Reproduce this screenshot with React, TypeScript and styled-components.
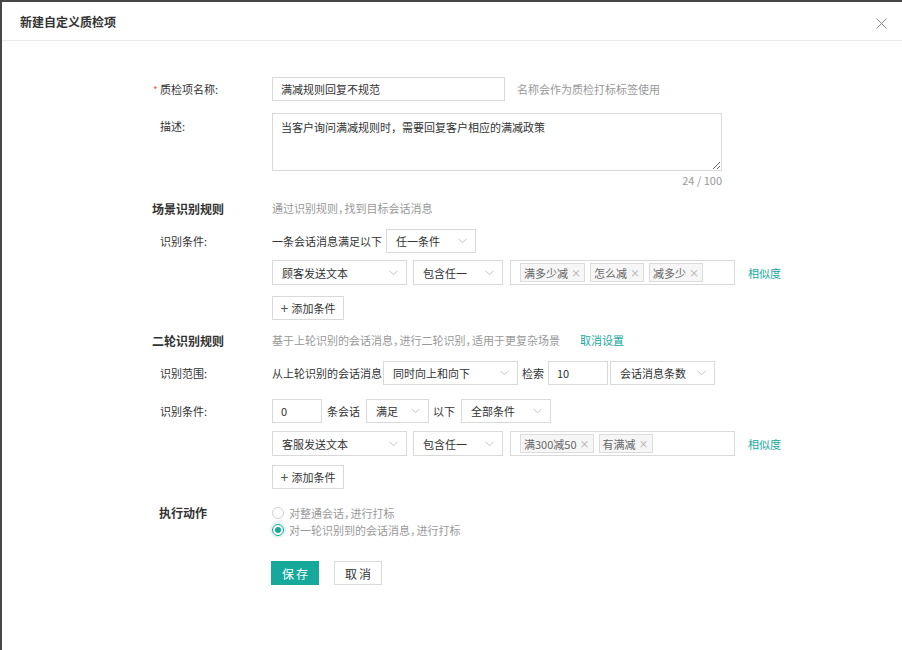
import React from 'react';
import styled, { createGlobalStyle } from 'styled-components';

const GlobalStyle = createGlobalStyle`
  html, body {
    margin: 0;
    padding: 0;
    background: #474747;
    font-family: "Noto Sans CJK SC", "Noto Sans", sans-serif;
    font-size: 11px;
    color: #333;
    font-feature-settings: "halt";
  }
  * { box-sizing: border-box; }
`;

const TEAL = '#17a89c';

const Modal = styled.div`
  margin: 2px 0 0 2px;
  background: #fff;
  height: 648px;
  overflow: hidden;
`;

const Header = styled.div`
  height: 39px;
  border-bottom: 1px solid #e9e9e9;
  display: flex;
  align-items: center;
  justify-content: space-between;
  padding: 0 14px 0 18px;
`;

const HeaderTitle = styled.div`
  font-size: 12px;
  font-weight: 700;
  color: #333;
`;

const Close = styled.button`
  border: 0;
  background: none;
  padding: 0;
  width: 14px;
  height: 14px;
  margin-top: 4px;
  display: flex;
  align-items: center;
  justify-content: center;
  cursor: pointer;
`;

const Body = styled.div`
  padding: 36px 0 0 150px;
`;

const Row = styled.div<{ $mt?: number; $h?: number }>`
  display: flex;
  align-items: center;
  margin-top: ${p => p.$mt ?? 0}px;
  min-height: ${p => p.$h ?? 24}px;
`;

const TopRow = styled.div<{ $mt?: number }>`
  display: flex;
  align-items: flex-start;
  margin-top: ${p => p.$mt ?? 0}px;
`;

const Label = styled.div<{ $top?: number }>`
  width: 120px;
  flex: none;
  padding-left: 8px;
  color: #333;
  position: relative;
  padding-top: ${p => p.$top ?? 0}px;
`;

const Star = styled.span`
  position: absolute;
  left: 1px;
  top: 1px;
  color: #f25a5a;
  font-size: 10px;
`;

const SectionTitle = styled.div<{ $pl?: number }>`
  width: 120px;
  flex: none;
  padding-left: ${p => p.$pl ?? 0}px;
  font-weight: 700;
  color: #333;
  font-size: 12px;
`;

const Hint = styled.span<{ $ml?: number }>`
  color: #999;
  margin-left: ${p => p.$ml ?? 0}px;
`;

const Comma = styled.span`
  margin-right: 1px;
`;

const Text = styled.span<{ $ml?: number; $mr?: number }>`
  color: #333;
  margin-left: ${p => p.$ml ?? 0}px;
  margin-right: ${p => p.$mr ?? 0}px;
  white-space: nowrap;
`;

const Link = styled.a<{ $ml?: number }>`
  color: ${TEAL};
  margin-left: ${p => p.$ml ?? 0}px;
  text-decoration: none;
  cursor: pointer;
`;

const Input = styled.div<{ $w: number; $h?: number }>`
  width: ${p => p.$w}px;
  height: ${p => p.$h ?? 24}px;
  border: 1px solid #d9d9d9;
  display: flex;
  align-items: center;
  padding: 0 8px;
  color: #333;
  flex: none;
`;

const TextArea = styled.textarea`
  width: 450px;
  height: 58px;
  border: 1px solid #d9d9d9;
  padding: 4px 8px;
  font-family: inherit;
  font-size: 11px;
  color: #333;
  line-height: 18px;
  outline: none;
  display: block;
`;

const Counter = styled.div`
  width: 450px;
  margin-left: 120px;
  margin-top: 1px;
  text-align: right;
  color: #999;
  height: 16px;
  line-height: 16px;
`;

const SelectBox = styled.div<{ $w: number; $h?: number; $ml?: number }>`
  width: ${p => p.$w}px;
  height: ${p => p.$h ?? 24}px;
  margin-left: ${p => p.$ml ?? 0}px;
  border: 1px solid #d9d9d9;
  display: flex;
  align-items: center;
  justify-content: space-between;
  padding: 0 8px 0 9px;
  color: #333;
  flex: none;
  white-space: nowrap;
`;

const TagBox = styled.div`
  width: 225px;
  height: 25px;
  margin-left: 7px;
  border: 1px solid #d9d9d9;
  display: flex;
  align-items: center;
  gap: 5px;
  padding: 0 9px;
  flex: none;
`;

const Tag = styled.span`
  display: inline-flex;
  align-items: center;
  height: 19px;
  padding: 0 3px;
  background: #f6f6f6;
  border: 1px solid #dcdcdc;
  color: #666;
  white-space: nowrap;
`;

const TagX = styled.span`
  margin-left: 3px;
  color: #aaa;
  font-size: 10px;
`;

const AddButton = styled.button`
  height: 24px;
  width: 72px;
  margin-left: 120px;
  border: 1px solid #d9d9d9;
  background: #fff;
  font-family: inherit;
  font-size: 11px;
  color: #333;
  display: flex;
  align-items: center;
  justify-content: center;
  gap: 3px;
  padding: 0;
`;

const Plus = styled.span`
  font-size: 14px;
  line-height: 1;
  color: #555;
`;

const RadioGroup = styled.div`
  display: flex;
  flex-direction: column;
`;

const RadioItem = styled.label`
  display: flex;
  align-items: center;
  height: 17px;
  color: #999;
`;

const RadioDot = styled.span<{ $checked?: boolean }>`
  width: 12px;
  height: 12px;
  border-radius: 50%;
  border: 1px solid ${p => (p.$checked ? TEAL : '#d0d0d0')};
  margin-right: 5px;
  position: relative;
  box-shadow: ${p => (p.$checked ? '0 0 0 2px rgba(23,168,156,0.12)' : 'none')};
  &::after {
    content: '';
    display: ${p => (p.$checked ? 'block' : 'none')};
    position: absolute;
    left: 2px;
    top: 2px;
    width: 6px;
    height: 6px;
    border-radius: 50%;
    background: ${TEAL};
  }
`;

const Actions = styled.div`
  display: flex;
  gap: 15px;
  margin-top: 23px;
  margin-left: 119px;
`;

const Btn = styled.button<{ $primary?: boolean }>`
  height: 24px;
  width: 48px;
  font-family: inherit;
  font-size: 12px;
  letter-spacing: 2px;
  padding: 0 0 0 2px;
  border: 1px solid ${p => (p.$primary ? TEAL : '#d9d9d9')};
  background: ${p => (p.$primary ? TEAL : '#fff')};
  color: ${p => (p.$primary ? '#fff' : '#333')};
`;

const Chevron = () => (
  <svg width="9" height="6" viewBox="0 0 9 6" fill="none">
    <path d="M0.5 0.8 L4.5 4.8 L8.5 0.8" stroke="#c4c4c4" strokeWidth="1" />
  </svg>
);

const Select: React.FC<{ w: number; h?: number; ml?: number; children: React.ReactNode }> = ({ w, h, ml, children }) => (
  <SelectBox $w={w} $h={h} $ml={ml}>
    <span>{children}</span>
    <Chevron />
  </SelectBox>
);

const Tags: React.FC<{ items: string[] }> = ({ items }) => (
  <TagBox>
    {items.map(t => (
      <Tag key={t}>
        {t}
        <TagX>×</TagX>
      </Tag>
    ))}
  </TagBox>
);

const App: React.FC = () => (
  <>
    <GlobalStyle />
    <Modal>
      <Header>
        <HeaderTitle>新建自定义质检项</HeaderTitle>
        <Close>
          <svg width="11" height="11" viewBox="0 0 11 11">
            <path d="M0.5 0.5 L10.5 10.5 M10.5 0.5 L0.5 10.5" stroke="#8a8a8a" strokeWidth="1" />
          </svg>
        </Close>
      </Header>
      <Body>
        <Row $h={24}>
          <Label>
            <Star>*</Star>质检项名称:
          </Label>
          <Input $w={233}>满减规则回复不规范</Input>
          <Hint $ml={12}>名称会作为质检打标标签使用</Hint>
        </Row>
        <TopRow $mt={12}>
          <Label $top={5}>描述:</Label>
          <TextArea defaultValue="当客户询问满减规则时，需要回复客户相应的满减政策" />
        </TopRow>
        <Counter>24 / 100</Counter>

        <Row $mt={10} $h={20}>
          <SectionTitle>场景识别规则</SectionTitle>
          <Hint>通过识别规则<Comma>，</Comma>找到目标会话消息</Hint>
        </Row>
        <Row $mt={11}>
          <Label>识别条件:</Label>
          <Text $mr={4}>一条会话消息满足以下</Text>
          <Select w={90}>任一条件</Select>
        </Row>
        <Row $mt={7} $h={25}>
          <Label />
          <Select w={135} h={25}>顾客发送文本</Select>
          <Select w={90} h={25} ml={6}>包含任一</Select>
          <Tags items={['满多少减', '怎么减', '减多少']} />
          <Link $ml={13}>相似度</Link>
        </Row>
        <Row $mt={11}>
          <AddButton>
            <Plus>+</Plus> 添加条件
          </AddButton>
        </Row>

        <Row $mt={10} $h={20}>
          <SectionTitle>二轮识别规则</SectionTitle>
          <Hint>
            基于上轮识别的会话消息<Comma>，</Comma>进行二轮识别<Comma>，</Comma>适用于更复杂场景
          </Hint>
          <Link $ml={20}>取消设置</Link>
        </Row>
        <Row $mt={11}>
          <Label>识别范围:</Label>
          <Text $mr={1}>从上轮识别的会话消息</Text>
          <Select w={135}>同时向上和向下</Select>
          <Text $ml={4} $mr={4}>检索</Text>
          <Input $w={60}>10</Input>
          <Select w={105} ml={2}>会话消息条数</Select>
        </Row>
        <Row $mt={14}>
          <Label>识别条件:</Label>
          <Input $w={50}>0</Input>
          <Text $ml={5} $mr={6}>条会话</Text>
          <Select w={63}>满足</Select>
          <Text $ml={4} $mr={6}>以下</Text>
          <Select w={90}>全部条件</Select>
        </Row>
        <Row $mt={8} $h={25}>
          <Label />
          <Select w={135} h={25}>客服发送文本</Select>
          <Select w={90} h={25} ml={6}>包含任一</Select>
          <Tags items={['满300减50', '有满减']} />
          <Link $ml={13}>相似度</Link>
        </Row>
        <Row $mt={9}>
          <AddButton>
            <Plus>+</Plus> 添加条件
          </AddButton>
        </Row>

        <TopRow $mt={15}>
          <SectionTitle $pl={7}>执行动作</SectionTitle>
          <RadioGroup>
            <RadioItem>
              <RadioDot />
              对整通会话<Comma>，</Comma>进行打标
            </RadioItem>
            <RadioItem>
              <RadioDot $checked />
              对一轮识别到的会话消息<Comma>，</Comma>进行打标
            </RadioItem>
          </RadioGroup>
        </TopRow>
        <Actions>
          <Btn $primary>保存</Btn>
          <Btn>取消</Btn>
        </Actions>
      </Body>
    </Modal>
  </>
);

export default App;
